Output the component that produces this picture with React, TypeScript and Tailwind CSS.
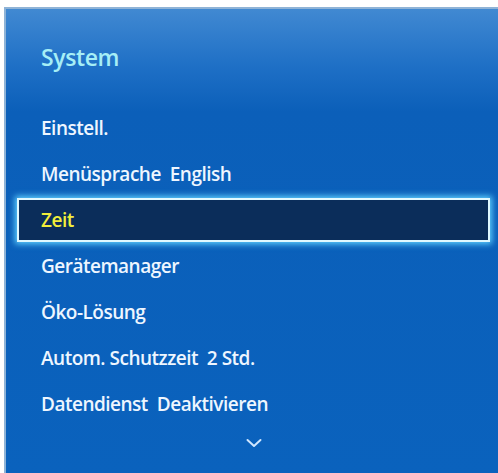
import React from "react";

const items = [
  "Einstell.",
  "Menüsprache  English",
  "Zeit",
  "Gerätemanager",
  "Öko-Lösung",
  "Autom. Schutzzeit  2 Std.",
  "Datendienst  Deaktivieren",
];

export default function App() {
  return (
    <div className="w-[498px] h-[473px] bg-white pt-[7px] pl-[4px] overflow-hidden" style={{ fontFamily: '"Open Sans", "Noto Sans", sans-serif' }}>
      <div className="w-[494px] h-[470px] border-l-[2px] border-t-[2px] border-[#8fb3d6] bg-[linear-gradient(180deg,#4189d2_0%,#1f70c6_12%,#0b5fb9_22%,#0a62bd_100%)] flex flex-col pl-[11px] pr-[8px]">
        <div className="h-[96px] flex items-center pl-[24px]">
          <span className="text-[23px] font-semibold text-[#a6eef6] tracking-[-0.4px]">System</span>
        </div>
        <div className="flex flex-col">
          {items.map((t, i) => {
            const sel = t === "Zeit";
            return (
              <div
                key={i}
                className={
                  sel
                    ? "h-[44px] my-[1px] flex items-center pl-[22px] bg-[#0b2d5a] border-[2px] border-[#dff8ff] shadow-[0_0_6px_2px_#5fd0ff]"
                    : "h-[46px] flex items-center pl-[24px]"
                }
              >
                <span
                  className={
                    "text-[19px] font-semibold tracking-[-0.5px] whitespace-pre " +
                    (sel ? "text-[#f2ee3a]" : "text-[#eef6ff]")
                  }
                >
                  {t}
                </span>
              </div>
            );
          })}
        </div>
        <div className="flex justify-center mt-[11px]">
          <svg width="16" height="10" viewBox="0 0 16 10" fill="none">
            <path d="M1.5 2 L8 8 L14.5 2" stroke="#cfe6ff" strokeWidth="2" strokeLinecap="round" strokeLinejoin="round" />
          </svg>
        </div>
      </div>
    </div>
  );
}
